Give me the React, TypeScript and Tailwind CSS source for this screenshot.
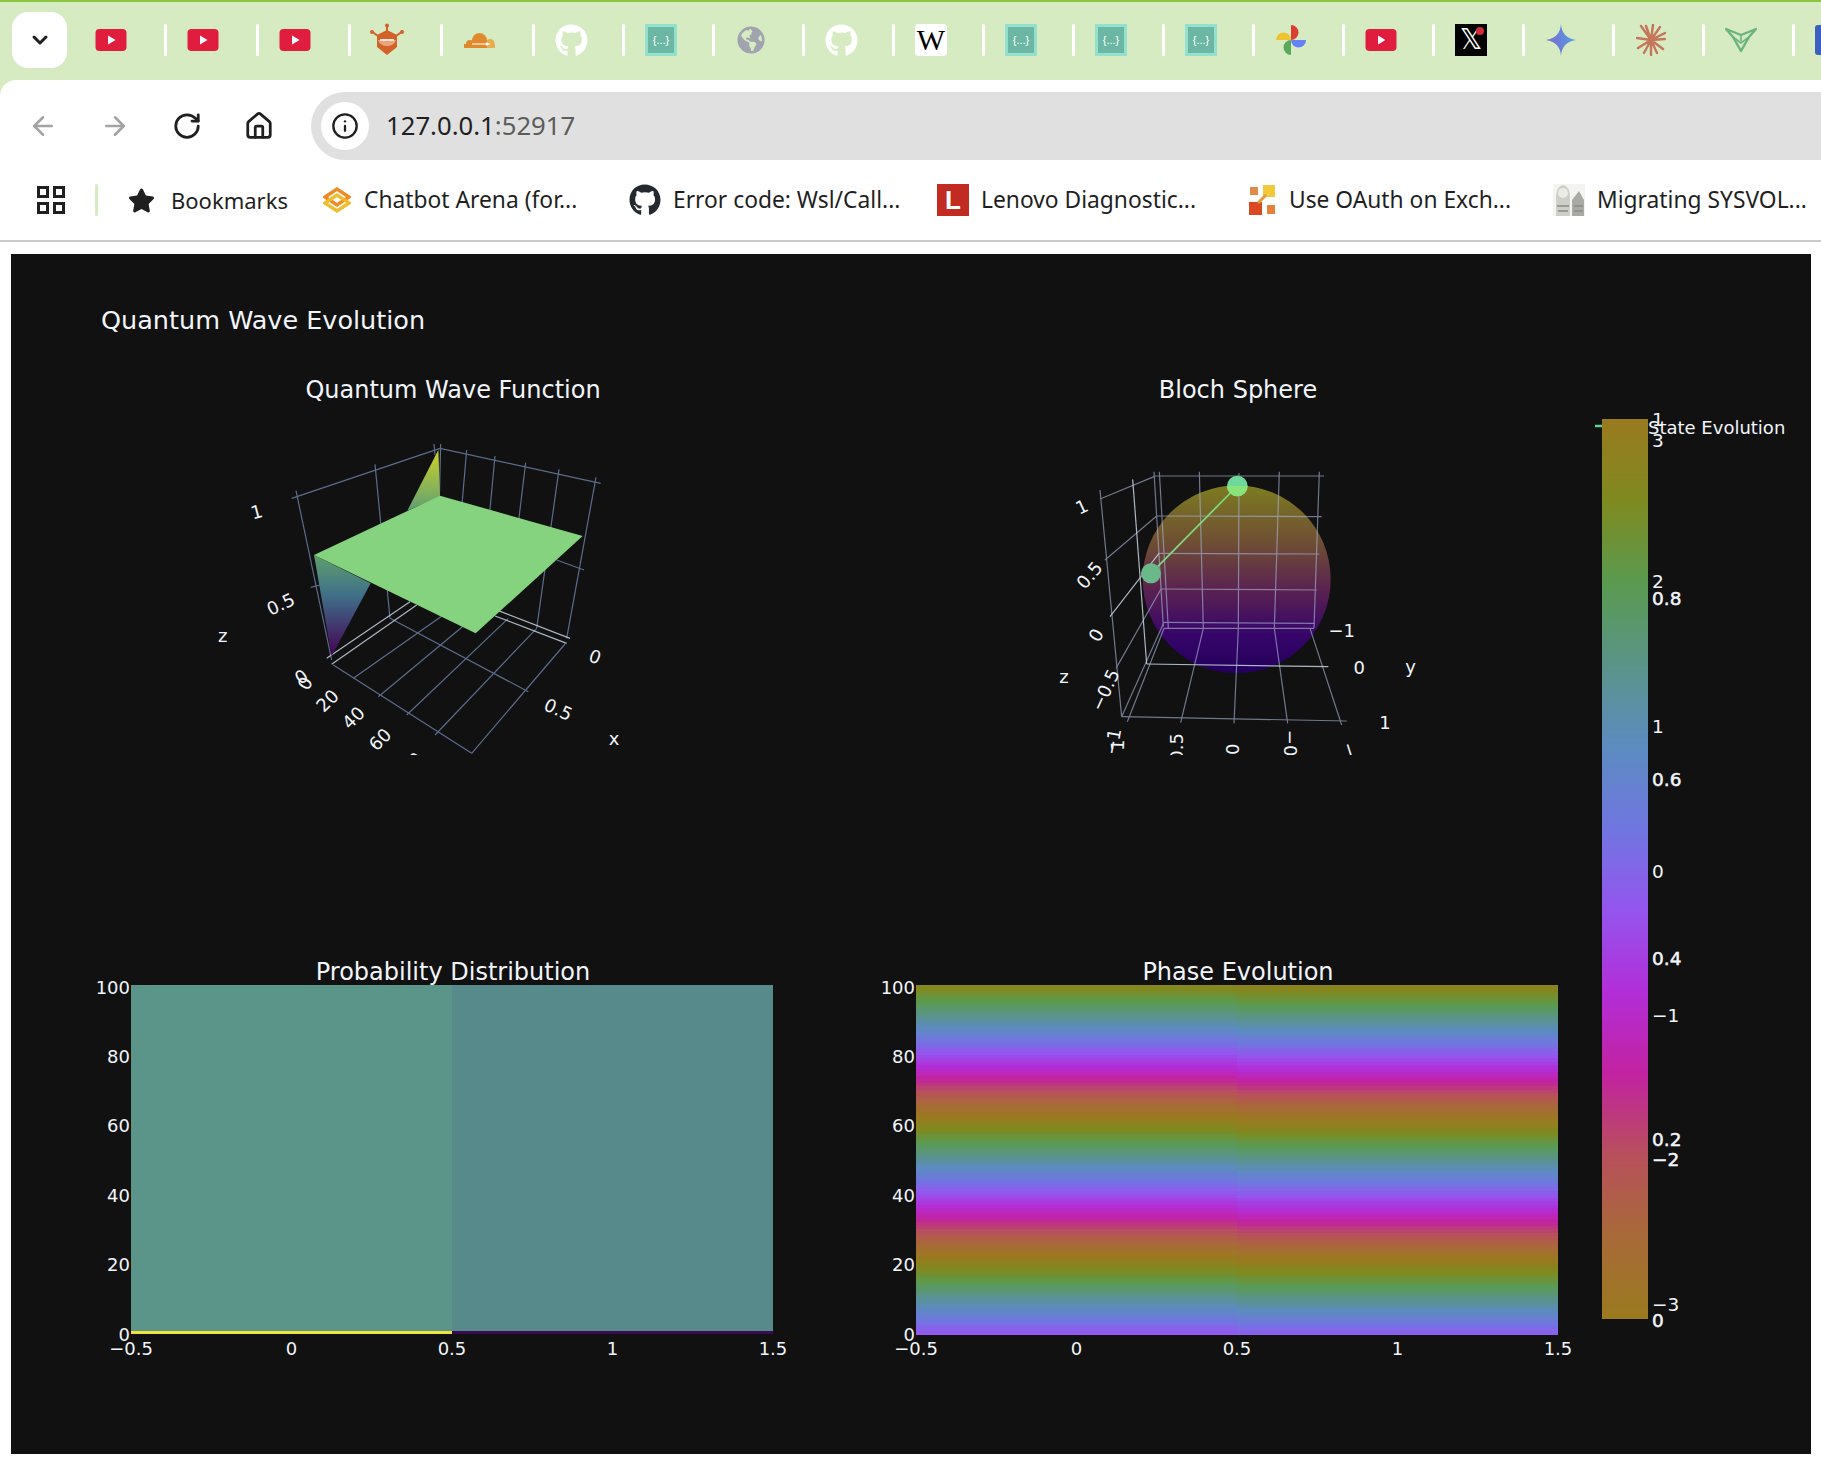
import React from 'react';
import { ArrowLeft, ArrowRight, ChevronDown, House, Info, RotateCw } from 'lucide-react';
import { FaGithub, FaGlobeAmericas, FaStar } from 'react-icons/fa';

const phaseStops = ['#9a7a1f', '#7f8a20', '#5a9a50', '#5a9488', '#5c8cc0', '#7076e0', '#9455ee', '#b22ed8', '#c222a0', '#b8505c', '#a86a38', '#9a7a1f'];

function hexToRgb(hex: string) {
  return [1, 3, 5].map((i) => parseInt(hex.slice(i, i + 2), 16));
}

function phaseColor(t: number) {
  const p = (((t % 1) + 1) % 1) * (phaseStops.length - 1);
  const i = Math.floor(p);
  const a = hexToRgb(phaseStops[i]);
  const b = hexToRgb(phaseStops[i + 1]);
  const c = a.map((v, k) => Math.round(v + (b[k] - v) * (p - i)));
  return `rgb(${c[0]},${c[1]},${c[2]})`;
}

const tabs = ['yt', 'yt', 'yt', 'bot', 'cloud', 'gh', 'json', 'globe', 'gh', 'wiki', 'json', 'json', 'json', 'photos', 'yt', 'x', 'gemini', 'claude', 'vee', 'blue'];

function TabIcon({ kind }: { kind: string }) {
  if (kind === 'yt') {
    return (
      <svg width="32" height="24" viewBox="0 0 32 24">
        <rect x="0.5" y="1" width="31" height="22" rx="4" fill="#e01c3f" />
        <path d="M13 7.5 L20.5 12 L13 16.5 Z" fill="#fff" />
      </svg>
    );
  }
  if (kind === 'bot') {
    return (
      <svg width="36" height="34" viewBox="0 0 36 34">
        <path d="M18 1 V8 M2 8 L9 13 M34 8 L27 13" stroke="#d2622a" strokeWidth="2" />
        <circle cx="18" cy="2.5" r="2" fill="#d2622a" />
        <circle cx="3" cy="9" r="2" fill="#d2622a" />
        <circle cx="33" cy="9" r="2" fill="#d2622a" />
        <path d="M8 12 L18 7 L28 12 V24 L18 32 L8 24 Z" fill="#d2622a" />
        <path d="M9 17 H27 Q25 23 18 23 Q11 23 9 17 Z" fill="#e9a47c" />
        <path d="M11 17 H25" stroke="#f5e6d3" strokeWidth="2" />
      </svg>
    );
  }
  if (kind === 'cloud') {
    return (
      <svg width="31" height="15" viewBox="0 0 31 15">
        <circle cx="26" cy="10.5" r="4.5" fill="#e8ad50" />
        <rect x="20" y="11" width="11" height="4" fill="#e8ad50" />
        <circle cx="15.5" cy="7.5" r="7.5" fill="#e08a2e" />
        <circle cx="6" cy="11" r="4" fill="#e08a2e" />
        <rect x="0" y="11" width="23" height="4" fill="#e08a2e" />
        <path d="M8 11 H26" stroke="#fff" strokeWidth="1" />
        <circle cx="23" cy="11" r="1.5" fill="#fff" />
      </svg>
    );
  }
  if (kind === 'gh') return <FaGithub size={33} color="#fff" />;
  if (kind === 'globe') return <FaGlobeAmericas size={28} color="#a1a4ae" />;
  if (kind === 'json') {
    return (
      <div className="flex h-8 w-8 items-center justify-center border-[3px] border-[#93e0cc] bg-[#6cb7a4] font-['Liberation_Sans',sans-serif] text-[11px] leading-none text-white">
        {'{...}'}
      </div>
    );
  }
  if (kind === 'wiki') {
    return (
      <div className="flex h-8 w-8 items-center justify-center overflow-hidden rounded-[4px] bg-white font-['Liberation_Serif',serif] text-[30px] leading-none text-black">
        W
      </div>
    );
  }
  if (kind === 'photos') {
    return (
      <svg width="30" height="30" viewBox="0 0 30 30">
        <path d="M15 15 V0 A7.5 7.5 0 0 1 15 15 Z" fill="#d9402f" />
        <path d="M15 15 H30 A7.5 7.5 0 0 1 15 15 Z" fill="#6382f5" />
        <path d="M15 15 V30 A7.5 7.5 0 0 1 15 15 Z" fill="#5aa95a" />
        <path d="M15 15 H0 A7.5 7.5 0 0 1 15 15 Z" fill="#f0c22e" />
      </svg>
    );
  }
  if (kind === 'x') {
    return (
      <div className="relative flex h-8 w-8 items-center justify-center overflow-hidden bg-black font-['DejaVu_Sans',sans-serif] text-[28px] leading-none text-white">
        𝕏
        <span className="absolute right-[3px] top-[3px] h-[8px] w-[8px] rounded-full bg-[#cf2a36]" />
      </div>
    );
  }
  if (kind === 'gemini') {
    return (
      <svg width="30" height="32" viewBox="0 0 30 32">
        <defs>
          <linearGradient id="gem" x1="0" y1="0.6" x2="1" y2="0.4">
            <stop offset="0" stopColor="#7b68c8" />
            <stop offset="1" stopColor="#55a0ea" />
          </linearGradient>
        </defs>
        <path d="M15 0 Q16 14 30 16 Q16 18 15 32 Q14 18 0 16 Q14 14 15 0 Z" fill="url(#gem)" />
      </svg>
    );
  }
  if (kind === 'claude') {
    return (
      <svg width="30" height="32" viewBox="0 0 30 32" stroke="#c4755a" strokeWidth="2.4" strokeLinecap="round">
        <path d="M15 16 L15 31 M15 16 L17 1 M15 16 L24 3 M15 16 L29 9 M15 16 L29 15 M15 16 L27 25 M15 16 L21 29 M15 16 L8 29 M15 16 L2 24 M15 16 L1 14 M15 16 L5 2 M15 16 L10 2" />
      </svg>
    );
  }
  if (kind === 'vee') {
    return (
      <svg width="32" height="26" viewBox="0 0 32 26" fill="none" stroke="#6cb37f" strokeWidth="2.4" strokeLinejoin="round">
        <path d="M1 2 L16 8 L31 2 L24 10 L16 24 L8 10 Z" />
        <path d="M16 8 V14 M8 10 L16 16 L24 10" strokeWidth="1.6" />
      </svg>
    );
  }
  return <div className="h-[30px] w-8 rounded-[3px] bg-[#3b5fc0]" />;
}

function TabStrip() {
  return (
    <div className="flex h-20 items-center overflow-hidden border-t-2 border-[#8cc63f] bg-[#d6ebc2] pb-[2px] pl-3">
      <div className="mr-2 flex h-14 w-[55px] shrink-0 items-center justify-center rounded-2xl bg-white">
        <ChevronDown size={24} strokeWidth={3} color="#1f1f1f" />
      </div>
      {tabs.map((kind, i) => (
        <div key={i} className={`flex h-8 shrink-0 items-center ${i < 5 ? 'w-[92px]' : 'w-[90px]'}`}>
          <div className={`flex flex-1 items-center justify-center ${i < 5 ? 'pr-[17px]' : 'pr-[15px]'}`}>
            <TabIcon kind={kind} />
          </div>
          <div className="h-8 w-[3px] rounded-full bg-white" />
        </div>
      ))}
    </div>
  );
}

function Toolbar() {
  return (
    <div className="flex h-20 items-center rounded-tl-2xl bg-white pt-3">
      <div className="flex w-[311px] shrink-0 items-center pl-[28px]">
        <ArrowLeft size={30} color="#a3a3a3" strokeWidth={2} />
        <ArrowRight size={30} color="#a3a3a3" strokeWidth={2} className="ml-[42px]" />
        <RotateCw size={30} color="#1f1f1f" strokeWidth={2.2} className="ml-[42px]" />
        <House size={30} color="#1f1f1f" strokeWidth={2.2} className="ml-[42px]" />
      </div>
      <div className="flex h-[68px] flex-1 items-center rounded-l-full bg-[#e0e0e0] pl-[10px]">
        <div className="flex h-12 w-12 items-center justify-center rounded-full bg-white">
          <Info size={28} color="#1f1f1f" strokeWidth={2} />
        </div>
        <span className="ml-[17px] font-['Noto_Sans',sans-serif] text-[25.7px] text-[#1f1f1f]">
          127.0.0.1<span className="text-[#5c5c5c]">:52917</span>
        </span>
      </div>
    </div>
  );
}

function AppsIcon() {
  return (
    <svg width="28" height="28" viewBox="0 0 28 28" fill="none" stroke="#1f1f1f" strokeWidth="3">
      <rect x="1.5" y="1.5" width="9" height="9" />
      <rect x="17.5" y="1.5" width="9" height="9" />
      <rect x="1.5" y="17.5" width="9" height="9" />
      <rect x="17.5" y="17.5" width="9" height="9" />
    </svg>
  );
}

function ArenaIcon() {
  return (
    <svg width="28" height="28" viewBox="0 0 28 28" fill="none" strokeWidth="3.4">
      <path d="M2 11 L14 3 L26 11 L14 19 Z" stroke="#ef8a24" />
      <path d="M2 17 L14 9 L26 17 L14 25 Z" stroke="#f0bd2e" />
    </svg>
  );
}

function LenovoIcon() {
  return (
    <div className="flex h-8 w-8 items-center justify-center bg-[#c22b22] font-['Liberation_Sans',sans-serif] text-[26px] font-bold leading-none text-white">
      L
    </div>
  );
}

function OfficeIcon() {
  return (
    <svg width="26" height="30" viewBox="0 0 26 30">
      <rect x="1" y="2" width="8" height="8" fill="#e08a4a" />
      <rect x="14" y="0" width="12" height="12" fill="#f2c83c" />
      <rect x="0" y="17" width="13" height="13" fill="#da4a22" />
      <rect x="18" y="20" width="8" height="9" fill="#e8803a" />
      <path d="M9 18 L17 10" stroke="#e9983a" strokeWidth="3" />
    </svg>
  );
}

function PortraitIcon() {
  return (
    <svg width="32" height="32" viewBox="0 0 32 32">
      <rect width="32" height="32" fill="#f4f4f2" />
      <path d="M3 32 V14 Q3 2 10 1 Q17 2 17 14 V32 Z" fill="#cfcfca" />
      <circle cx="10" cy="9" r="5" fill="#ecebe6" />
      <path d="M19 32 V16 L26 7 L31 16 V32 Z" fill="#a9a9a6" />
      <path d="M4 22 H16 M5 27 H15 M21 22 H30 M21 27 H30" stroke="#8a8a88" strokeWidth="1.5" />
    </svg>
  );
}

function Bookmark({ icon, label, className, gap = 'ml-3' }: { icon: React.ReactNode; label: string; className: string; gap?: string }) {
  return (
    <div className={`flex shrink-0 items-center ${className}`}>
      {icon}
      <span className={`${gap} whitespace-nowrap`}>{label}</span>
    </div>
  );
}

function BookmarksBar() {
  return (
    <div className="flex h-[82px] items-center overflow-hidden border-b-2 border-[#cacaca] bg-white pl-[37px] font-['Noto_Sans',sans-serif] text-[22.8px] text-[#1f1f1f]">
      <AppsIcon />
      <div className="ml-[30px] h-8 w-[3px] rounded-full bg-[#d6ebc2]" />
      <Bookmark icon={<FaStar size={27} color="#1f1f1f" />} label="Bookmarks" gap="ml-4 text-[22px]" className="ml-[30px] w-[195px]" />
      <Bookmark icon={<ArenaIcon />} label="Chatbot Arena (for..." gap="ml-[13px]" className="w-[306px]" />
      <Bookmark icon={<FaGithub size={32} color="#24292f" />} label="Error code: Wsl/Call..." className="w-[308px]" />
      <Bookmark icon={<LenovoIcon />} label="Lenovo Diagnostic..." className="w-[312px]" />
      <Bookmark icon={<OfficeIcon />} label="Use OAuth on Exch..." gap="ml-[14px]" className="w-[304px]" />
      <Bookmark icon={<PortraitIcon />} label="Migrating SYSVOL..." className="" />
    </div>
  );
}

const grid = '#5c6c8c';
const zero = '#c8d4e3';

function Segs({ lines, color }: { lines: number[][]; color: string }) {
  return (
    <g stroke={color} strokeWidth="3.6" fill="none">
      {lines.map(([x1, y1, x2, y2], i) => (
        <line key={i} x1={x1} y1={y1} x2={x2} y2={y2} />
      ))}
    </g>
  );
}

function Tick({ x, y, r = 0, t }: { x: number; y: number; r?: number; t: string }) {
  return (
    <text x={x} y={y} transform={`rotate(${r} ${x} ${y})`} textAnchor="middle" dominantBaseline="central" fill="#f2f5fa" fontSize="54">
      {t}
    </text>
  );
}

function WaveScene() {
  const back = [
    [305, 235, 750, 85], [750, 85, 1232, 190],
    [318, 212, 425, 720], [555, 133, 600, 595], [732, 72, 735, 105], [752, 72, 748, 240],
    [830, 90, 812, 300], [915, 108, 895, 320], [1007, 128, 985, 310], [1107, 148, 1040, 625], [1218, 172, 1130, 655],
    [1100, 420, 1182, 450], [362, 502, 390, 495],
    [600, 595, 1015, 815], [490, 775, 760, 585], [565, 830, 830, 610], [650, 885, 955, 595], [735, 945, 1040, 625],
    [430, 735, 845, 1000], [845, 1000, 1125, 672],
  ];
  const zeros = [[410, 715, 660, 545], [425, 733, 680, 555], [925, 572, 1140, 655], [915, 588, 1130, 670]];
  return (
    <svg width="460" height="335" viewBox="0 0 1380 1005" className="ml-[97px] mt-[17px] block">
      <defs>
        <linearGradient id="sideLeft" x1="0" y1="0" x2="0" y2="1">
          <stop offset="0" stopColor="#5fa06e" />
          <stop offset="0.4" stopColor="#3f6f88" />
          <stop offset="1" stopColor="#440154" />
        </linearGradient>
        <linearGradient id="sideTop" x1="0" y1="0" x2="0" y2="1">
          <stop offset="0" stopColor="#cdd425" />
          <stop offset="1" stopColor="#5f9f74" />
        </linearGradient>
      </defs>
      <Segs lines={back} color={grid} />
      <g opacity="0.85">
        <Segs lines={zeros} color={zero} />
      </g>
      <path d="M745 90 L750 230 L652 272 Z" fill="url(#sideTop)" />
      <path d="M372 405 L425 708 L542 490 Z" fill="url(#sideLeft)" />
      <path d="M372 405 L750 227 L1178 348 L857 640 Z" fill="#85d27f" />
      <Tick x={200} y={275} r={-15} t="1" />
      <Tick x={272} y={552} r={-25} t="0.5" />
      <Tick x={98} y={645} t="z" />
      <Tick x={334} y={770} r={-35} t="0" />
      <Tick x={345} y={790} r={-60} t="0" />
      <Tick x={412} y={842} r={-45} t="20" />
      <Tick x={490} y={893} r={-45} t="40" />
      <Tick x={570} y={958} r={-45} t="60" />
      <Tick x={665} y={1030} r={-45} t="80" />
      <Tick x={1215} y={710} r={20} t="0" />
      <Tick x={1105} y={868} r={25} t="0.5" />
      <Tick x={1272} y={955} t="x" />
    </svg>
  );
}

function BlochScene() {
  const lines = [
    [180, 177, 342, 110], [342, 108, 852, 108],
    [180, 150, 245, 830], [342, 95, 370, 560], [358, 95, 385, 565],
    [478, 95, 490, 565], [597, 100, 595, 565], [718, 95, 703, 565], [838, 95, 822, 565],
    [350, 228, 845, 230], [357, 340, 838, 342], [363, 447, 830, 450], [372, 547, 824, 550], [372, 565, 822, 565],
    [195, 360, 350, 228], [228, 685, 363, 447], [245, 830, 372, 547], [262, 845, 372, 565],
    [245, 830, 920, 843], [490, 565, 422, 848], [595, 565, 582, 850], [703, 565, 743, 850], [810, 565, 905, 855],
  ];
  const bright = [[278, 118, 320, 672], [210, 530, 357, 340], [320, 672, 865, 680]];
  return (
    <svg width="420" height="315" viewBox="0 0 1260 945" className="ml-[162px] mt-[37px] block">
      <defs>
        <linearGradient id="sphere" x1="0" y1="0" x2="0" y2="1">
          <stop offset="0" stopColor="#7c7c20" />
          <stop offset="0.3" stopColor="#6f4f33" />
          <stop offset="0.55" stopColor="#5b2350" />
          <stop offset="0.8" stopColor="#36056a" />
          <stop offset="1" stopColor="#22005a" />
        </linearGradient>
      </defs>
      <circle cx={590} cy={418} r={282} fill="url(#sphere)" />
      <g opacity="0.65">
        <Segs lines={lines} color="#a4b0d0" />
      </g>
      <g opacity="0.85">
        <Segs lines={bright} color={zero} />
      </g>
      <line x1={592} y1={138} x2={333} y2={400} stroke="#7fdc7f" strokeWidth="5" />
      <circle cx={333} cy={400} r={30} fill="#6bb88a" />
      <circle cx={592} cy={138} r={31} fill="#6fd79a" />
      <path d="M561 138 A31 31 0 0 0 623 138 Z" fill="#8ae27a" />
      <Tick x={125} y={200} r={-25} t="1" />
      <Tick x={148} y={405} r={-50} t="0.5" />
      <Tick x={168} y={585} r={-60} t="0" />
      <Tick x={195} y={750} r={-65} t="−0.5" />
      <Tick x={72} y={708} t="z" />
      <Tick x={905} y={572} t="−1" />
      <Tick x={958} y={682} t="0" />
      <Tick x={1035} y={848} t="1" />
      <Tick x={1112} y={680} t="y" />
      <Tick x={218} y={905} r={-80} t="−1" />
      <Tick x={232} y={915} r={-88} t="1" />
      <Tick x={408} y={945} r={-90} t="−0.5" />
      <Tick x={578} y={928} r={90} t="0" />
      <Tick x={750} y={935} r={90} t="−0.5" />
      <Tick x={935} y={945} r={72} t="−1" />
    </svg>
  );
}

function Axes() {
  const ys = ['100', '80', '60', '40', '20', '0'];
  const xs = ['−0.5', '0', '0.5', '1', '1.5'];
  return (
    <g fill="#f2f5fa" fontSize="18">
      {ys.map((t, i) => (
        <text key={t} x={37} y={i * 69.4 + 2} textAnchor="end" dominantBaseline="central">
          {t}
        </text>
      ))}
      {xs.map((t, i) => (
        <text key={t} x={38 + i * 160.5} y={363} textAnchor="middle" dominantBaseline="central">
          {t}
        </text>
      ))}
    </g>
  );
}

function ProbabilityChart() {
  return (
    <svg width="720" height="380" className="block overflow-visible">
      <rect x={38} y={0} width={321} height={349} fill="#5b9489" />
      <rect x={359} y={0} width={321} height={349} fill="#578b8b" />
      <rect x={38} y={346} width={321} height={3} fill="#efe33c" />
      <rect x={359} y={346} width={321} height={3} fill="#3c0a52" />
      <Axes />
    </svg>
  );
}

function PhaseChart() {
  const rows = Array.from({ length: 100 }, (_, i) => i);
  const rowH = 3.49;
  return (
    <svg width="720" height="380" className="block overflow-visible">
      <g shapeRendering="crispEdges">
        {rows.map((i) => {
          const y = i * rowH;
          return (
            <g key={i}>
              <rect x={38} y={y} width={321} height={rowH + 0.5} fill={phaseColor((y + 1.7 + 8) / 140)} />
              <rect x={359} y={y} width={321} height={rowH + 0.5} fill={phaseColor((y + 1.7 + 5) / 140)} />
            </g>
          );
        })}
      </g>
      <Axes />
    </svg>
  );
}

function ColorBars() {
  const labels: [string, number, boolean][] = [
    ['1', 14, false], ['3', 35, false], ['2', 176, false], ['0.8', 193, true], ['1', 321, false], ['0.6', 374, true],
    ['0', 466, false], ['0.4', 553, true], ['−1', 610, false], ['0.2', 734, true], ['−2', 754, true], ['−3', 899, false], ['0', 915, true],
  ];
  return (
    <svg width="213" height="930" className="mt-[30px] block shrink-0 overflow-visible">
      <defs>
        <linearGradient id="phaseBar" x1="0" y1="0" x2="0" y2="1">
          {phaseStops.map((c, i) => (
            <stop key={i} offset={i / (phaseStops.length - 1)} stopColor={c} />
          ))}
        </linearGradient>
      </defs>
      <line x1={-3} y1={21} x2={4} y2={21} stroke="#5fd08f" strokeWidth="2.5" />
      <rect x={4} y={14} width={46} height={900} fill="url(#phaseBar)" />
      <g fill="#f2f5fa" fontSize="18.5">
        {labels.map(([t, y, heavy], i) => (
          <text key={i} x={54} y={y} dominantBaseline="central" stroke={heavy ? '#f2f5fa' : 'none'} strokeWidth={heavy ? 0.5 : 0}>
            {t}
          </text>
        ))}
        <text x={50} y={22} dominantBaseline="central" fontSize="18">
          State Evolution
        </text>
      </g>
    </svg>
  );
}

function PlotPanel() {
  const heading = 'h-7 text-center text-[24px] leading-[30px] text-[#f2f5fa]';
  return (
    <div className="mx-[11px] mt-3 h-[1200px] w-[1800px] bg-[#111111] pt-[51px] font-['DejaVu_Sans',sans-serif]">
      <h1 className="h-7 pl-[90px] text-[25.5px] font-normal leading-[30px] text-[#f2f5fa]">Quantum Wave Evolution</h1>
      <div className="mt-[42px] flex pl-[82px]">
        <div className="grid w-[1505px] shrink-0 grid-cols-[720px_720px] gap-x-[65px]">
          <div className="h-[582px]">
            <h2 className={heading}>Quantum Wave Function</h2>
            <WaveScene />
          </div>
          <div className="h-[582px]">
            <h2 className={heading}>Bloch Sphere</h2>
            <BlochScene />
          </div>
          <div>
            <h2 className={heading}>Probability Distribution</h2>
            <ProbabilityChart />
          </div>
          <div>
            <h2 className={heading}>Phase Evolution</h2>
            <PhaseChart />
          </div>
        </div>
        <ColorBars />
      </div>
    </div>
  );
}

export default function App() {
  return (
    <div className="h-[1464px] w-[1821px] overflow-hidden bg-white">
      <TabStrip />
      <div className="bg-[#d6ebc2]">
        <Toolbar />
      </div>
      <BookmarksBar />
      <PlotPanel />
    </div>
  );
}
